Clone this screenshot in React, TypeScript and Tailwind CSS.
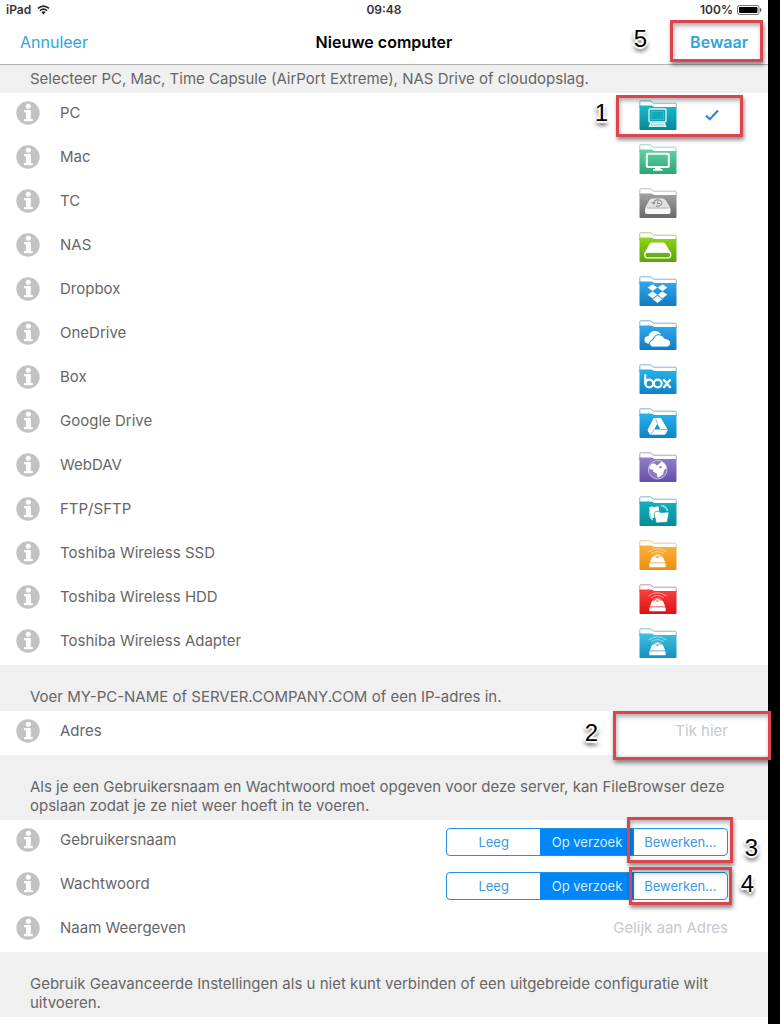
import React, { useState } from "react";
import { clsx } from "clsx";

type Theme = { id: string; top: string; bottom: string; edge: string };

type Source = { name: string; theme: Theme; glyph: React.ReactNode };

const router = (
  <g>
    <path d="M9.500 12Q18.500 5.500 27.500 12M12 13.800Q18.500 9.300 25 13.800M14.500 15.500Q18.500 12.700 22.500 15.500" fill="none" stroke="#fff" strokeOpacity=".5" strokeWidth="1" />
    <path d="M10.800 22.500L12.800 17.500Q13.200 16.500 14.200 16.500H15.700Q16.300 15 18.500 15T21.300 16.500H22.800Q23.800 16.500 24.200 17.500L26.200 22.500Z" fill="#fff" />
    <path d="M16.500 16.700Q18.500 19.800 20.500 16.700L19.500 16H17.500Z" fill="#c98a4a" fillOpacity=".65" />
    <rect x="10.300" y="23.300" width="16.400" height="4" rx=".8" fill="#fff" />
  </g>
);

const teal: Theme = { id: "teal", top: "#18b9cc", bottom: "#068798", edge: "#7fb8cc" };
const mint: Theme = { id: "mint", top: "#5fd3a4", bottom: "#2aa873", edge: "#8fdcbc" };
const grey: Theme = { id: "grey", top: "#a2a2a2", bottom: "#696969", edge: "#bdbdbd" };
const lime: Theme = { id: "lime", top: "#8fd414", bottom: "#5aa40c", edge: "#a6cf70" };
const blue: Theme = { id: "blue", top: "#2fa9ec", bottom: "#1279c4", edge: "#78b4e0" };
const sky: Theme = { id: "sky", top: "#27b2ea", bottom: "#0c84c8", edge: "#78b4e0" };
const violet: Theme = { id: "violet", top: "#8f7fca", bottom: "#6650a8", edge: "#aaa0cc" };
const sea: Theme = { id: "sea", top: "#12b3bd", bottom: "#078a92", edge: "#72bcc8" };
const orange: Theme = { id: "orange", top: "#fbb13c", bottom: "#ee8d12", edge: "#f0c58c" };
const red: Theme = { id: "red", top: "#fb4040", bottom: "#dc1212", edge: "#d68c98" };
const cyan: Theme = { id: "cyan", top: "#3fbfe2", bottom: "#1690bd", edge: "#82bcd4" };

const sources: Source[] = [
  {
    name: "PC",
    theme: teal,
    glyph: (
      <g>
        <rect x="10" y="9" width="17" height="13" rx="1" fill="#0fa3b5" stroke="#fff" strokeOpacity=".9" strokeWidth="1.300" />
        <rect x="12.500" y="11.300" width="12" height="8.400" fill="#12a9bb" stroke="#fff" strokeOpacity=".3" strokeWidth=".7" />
        <path d="M11 23H26L27.500 27H9.500Z" fill="#fff" fillOpacity=".9" />
        <path d="M12 24.500H25M11.500 25.800H25.500" stroke="#0b8fa0" strokeWidth=".4" strokeDasharray="1 .6" />
      </g>
    ),
  },
  {
    name: "Mac",
    theme: mint,
    glyph: (
      <g>
        <rect x="7.800" y="9.800" width="22" height="13.200" rx="1" fill="none" stroke="#fff" strokeWidth="2" />
        <path d="M16 23.500H21.500V25H23.500V26.800H14V25H16Z" fill="#fff" />
      </g>
    ),
  },
  {
    name: "TC",
    theme: grey,
    glyph: (
      <g>
        <path d="M6.500 19L10.500 12Q11.500 10.500 13.500 10.500H23.500Q25.500 10.500 26.500 12L31 19Q31 20 29.500 20H7.500Q6.500 20 6.500 19Z" fill="#fff" fillOpacity=".75" />
        <rect x="6" y="19.600" width="25.500" height="6.400" rx="2" fill="#fff" fillOpacity=".95" />
        <path d="M14.500 15.500A4.200 3.200 0 1 1 17 18M13 14.300L14.500 16L16.300 14.500M18.500 13.500V15.500H20.500" fill="none" stroke="#777" strokeWidth="1" />
        <path d="M8 20H29.500" stroke="#777" strokeWidth=".6" />
      </g>
    ),
  },
  {
    name: "NAS",
    theme: lime,
    glyph: (
      <g>
        <path d="M5.800 20.500L10.500 12Q11.300 10.500 13 10.500H24Q25.700 10.500 26.500 12L31.700 20.500Z" fill="#fff" />
        <rect x="5.800" y="20" width="25.900" height="5.800" rx="2.500" fill="none" stroke="#fff" strokeWidth="1.300" />
      </g>
    ),
  },
  {
    name: "Dropbox",
    theme: blue,
    glyph: (
      <path d="M13.600 8.200L18.500 11.600 13.600 15.200 8.500 11.600ZM23.400 8.200L28.500 11.600 23.400 15.200 18.500 11.600ZM13.600 15.200L18.500 18.800 13.600 22.400 8.500 18.800ZM23.400 15.200L28.500 18.800 23.400 22.400 18.500 18.800ZM13.500 23.200L18.500 19.800 23.500 23.200 18.500 27Z" fill="#fff" stroke="#3a9bdc" strokeWidth=".3" />
    ),
  },
  {
    name: "OneDrive",
    theme: blue,
    glyph: (
      <g fill="#fff">
        <path d="M8.500 23.500Q5 22.500 5.500 19Q6.300 16 9.500 16Q11.200 11 16 11Q20.500 11 22.200 14.800L13 24Z" />
        <path d="M13.500 27Q10.500 26.300 10.500 23.200Q10.800 20.300 14 19.800Q15.300 14.700 19.700 14.700Q24 14.700 25.800 18.500Q31.700 19 31.700 23.200Q31.500 27 27.800 27Z" stroke="#1d88d0" strokeWidth="1" />
      </g>
    ),
  },
  {
    name: "Box",
    theme: sky,
    glyph: (
      <g fill="none" stroke="#fff" strokeWidth="2.200" strokeLinecap="round" strokeLinejoin="round">
        <path d="M6.300 11V19.500" />
        <circle cx="10.300" cy="19.500" r="3.900" />
        <circle cx="18.800" cy="19.500" r="3.900" />
        <path d="M25 16L31 23.200M31 16L25 23.200" />
      </g>
    ),
  },
  {
    name: "Google Drive",
    theme: sky,
    glyph: (
      <g>
        <path d="M15.200 10H21.200Q22 10 22.500 11L28.300 21Q28.700 22 28.300 22.700L26.500 26Q26 26.800 25 26.800H12Q11 26.800 10.500 26L8.800 22.700Q8.500 22 9 21L14.200 11Q14.500 10 15.200 10Z" fill="#fff" />
        <path d="M18.300 15.800L21.500 21.500H15.200Z" fill="#1795d6" />
        <path d="M16.500 10.500L18.500 15.500M21.500 21.500H28M12 26.500L15.200 21.500" stroke="#1795d6" strokeWidth=".6" />
      </g>
    ),
  },
  {
    name: "WebDAV",
    theme: violet,
    glyph: (
      <g>
        <circle cx="18.700" cy="17.700" r="9.300" fill="#8a79c2" stroke="#d9d3ee" strokeWidth=".8" />
        <path d="M12 12.500Q13.500 11 15.500 11.500L18 13.500 20 12 22.500 9.500Q26.500 11.500 27.500 16L25 18.500L24 22.500 20.500 25Q18.500 26 18 24L17.800 21.500 14 19.800 14.500 18 10.500 17Q10 14.500 12 12.500Z" fill="#fff" />
        <path d="M21 14L23 15 22 16.500 20 15.800Z" fill="#8575bf" />
      </g>
    ),
  },
  {
    name: "FTP/SFTP",
    theme: sea,
    glyph: (
      <g>
        <path d="M14 24Q9.500 20.500 11 15M22 9.500Q27.500 10 28.500 15" fill="none" stroke="#8ee2e6" strokeWidth="1.500" />
        <path d="M10 11.500L13 10.200 14.500 11.200 19.500 10.200 20.800 19.500 12.500 22.500Z" fill="#fff" />
        <path d="M15 17.500L16.500 15.500 20 15.200 21 16.500 30 16 28.300 26 17.300 27Z" fill="#fff" stroke="#0c9da6" strokeWidth=".7" />
      </g>
    ),
  },
  { name: "Toshiba Wireless SSD", theme: orange, glyph: router },
  { name: "Toshiba Wireless HDD", theme: red, glyph: router },
  { name: "Toshiba Wireless Adapter", theme: cyan, glyph: router },
];

function Folder({ source }: { source: Source }) {
  const { theme, glyph, name } = source;
  const gradient = `folder-${theme.id}-${name.replace(/\W/g, "")}`;
  return (
    <svg width="38" height="30" viewBox="0 0 38 30" aria-hidden="true" className="shrink-0">
      <defs>
        <linearGradient id={gradient} x1="0" y1="0" x2="0" y2="1">
          <stop offset="0" stopColor={theme.top} />
          <stop offset="1" stopColor={theme.bottom} />
        </linearGradient>
      </defs>
      <path d="M.8 8V1.800Q.8.800 1.800.800H11Q12 .8 13 2L14.500 3.200H36.500Q37.200 3.200 37.200 4V8" fill="#fff" stroke={theme.edge} strokeWidth="1" />
      <path d="M.5 5.500H12.500L15.500 7H37.500V29Q37.500 30 36.500 30H1.500Q.5 30 .5 29Z" fill={`url(#${gradient})`} />
      {glyph}
    </svg>
  );
}

function InfoButton({ topic }: { topic: string }) {
  return (
    <button type="button" aria-label={`Info: ${topic}`} className="mb-1 size-6 shrink-0">
      <svg viewBox="0 0 24 24" className="size-6">
        <circle cx="12" cy="12" r="11.700" fill="#c2c2c2" />
        <circle cx="12.300" cy="5.200" r="2.500" fill="#fff" />
        <path d="M8 9H14.800V18H16.700V20.200H8V18H10V11.200H8Z" fill="#fff" />
      </svg>
    </button>
  );
}

function Note({ children, compact }: { children: React.ReactNode; compact?: boolean }) {
  return (
    <p className={clsx("bg-[#f0f0f0] pr-6 pl-[30px] text-[15px] leading-[19px] text-[#666]", compact ? "pt-1 pb-[5px]" : "pt-[22px] pb-[5px]")}>
      {children}
    </p>
  );
}

function Frame({ className }: { className: string }) {
  return <span aria-hidden="true" className={clsx("pointer-events-none absolute z-10 border-3 border-[#dc4450] shadow-[1px_3px_4px_rgba(0,0,0,0.45),inset_1px_3px_4px_rgba(0,0,0,0.3)]", className)} />;
}

function Step({ n, className }: { n: number; className: string }) {
  return (
    <span className={clsx("pointer-events-none absolute z-10 font-['Liberation_Sans',sans-serif] text-[24px] leading-6 text-black [text-shadow:0_0_3px_#fff,2px_0_1px_#fff,-2px_0_1px_#fff,0_-2px_1px_#fff,0_2px_1px_#fff,1px_4px_4px_rgba(0,0,0,0.7),-2px_3px_4px_rgba(0,0,0,0.4)]", className)}>
      {n}
    </span>
  );
}

const choices = ["Leeg", "Op verzoek", "Bewerken..."];

function Segmented({ label }: { label: string }) {
  const [active, setActive] = useState(1);
  return (
    <div role="group" aria-label={label} className="grid h-7 w-[282px] grid-cols-3 overflow-hidden rounded-sm border border-[#2490e4] bg-white">
      {choices.map((choice, i) => (
        <button
          key={choice}
          type="button"
          aria-pressed={active === i}
          onClick={() => setActive(i)}
          className={clsx("text-[13px] leading-5", active === i ? "bg-[#0087fa] text-[#d9eeff]" : "text-[#3d98de]")}
        >
          {choice}
        </button>
      ))}
    </div>
  );
}

const row = "relative flex h-11 items-center pr-10 pl-4";
const labelStyle = "mb-1 ml-5 flex-1 text-[15px] leading-5 text-[#666]";
const fieldStyle = "mb-1 w-40 bg-transparent text-right text-[15px] leading-5 text-[#666] outline-none placeholder:text-[#c8c8cc]";

export default function App() {
  const [selected, setSelected] = useState("PC");
  return (
    <div className="min-h-screen bg-black pr-3 font-['Inter','Liberation_Sans',sans-serif]">
      <div className="min-h-screen bg-white">
        <div className="grid h-5 grid-cols-3 items-center pr-1.5 pl-1.5 text-[12px] leading-4 font-semibold text-[#333]">
          <span className="flex items-center gap-1.5">
            iPad
            <svg width="13" height="10" viewBox="0 0 13 10" aria-hidden="true">
              <path d="M1 3.400Q6.500-1.200 12 3.400M2.900 5.600Q6.500 2.600 10.100 5.600" fill="none" stroke="#222" strokeWidth="1.600" />
              <path d="M4.300 7.100Q6.500 5.200 8.700 7.100L6.500 9.500Z" fill="#222" />
            </svg>
          </span>
          <span className="text-center">09:48</span>
          <span className="flex items-center justify-end gap-1">
            100%
            <svg width="25" height="10" viewBox="0 0 25 10" aria-hidden="true">
              <rect x=".5" y=".5" width="21.500" height="9" rx="2" fill="none" stroke="#777" />
              <rect x="2" y="2" width="18.500" height="6" rx="1" fill="#000" />
              <path d="M23 3Q24.500 3.500 24.500 5T23 7Z" fill="#555" />
            </svg>
          </span>
        </div>

        <header className="relative flex h-[45px] items-center justify-between border-b border-[#b2b2b2] px-5 text-[16px]">
          <button type="button" className="text-[#2ea5dc]">Annuleer</button>
          <h1 className="absolute inset-x-40 text-center font-semibold text-black">Nieuwe computer</h1>
          <button type="button" className="font-semibold text-[#2ea5dc]">Bewaar</button>
          <Step n={5} className="top-[7px] right-[121px]" />
          <Frame className="top-0 right-[5px] h-[42px] w-[93px]" />
        </header>

        <main>
          <Note compact>Selecteer PC, Mac, Time Capsule (AirPort Extreme), NAS Drive of cloudopslag.</Note>
          <ul>
            {sources.map((source) => (
              <li key={source.name} className="relative flex h-11 items-center pl-4">
                <InfoButton topic={source.name} />
                <button type="button" aria-pressed={selected === source.name} onClick={() => setSelected(source.name)} className="flex h-full min-w-0 flex-1 items-center pr-12 text-left">
                  <span className={labelStyle}>{source.name}</span>
                  <Folder source={source} />
                  <span className="ml-[27px] flex w-4 justify-center">
                    {selected === source.name && (
                      <svg width="14" height="12" viewBox="0 0 14 12" aria-hidden="true">
                        <path d="M1 6.500L4.800 10.200 13 1.500" fill="none" stroke="#3e80d8" strokeWidth="2.300" />
                      </svg>
                    )}
                  </span>
                </button>
                {source.name === "PC" && (
                  <>
                    <Step n={1} className="top-2 right-[160px]" />
                    <Frame className="top-0.5 right-[25px] h-[42px] w-[127px]" />
                  </>
                )}
              </li>
            ))}
          </ul>

          <Note>Voer MY-PC-NAME of SERVER.COMPANY.COM of een IP-adres in.</Note>
          <div className={row}>
            <InfoButton topic="Adres" />
            <label htmlFor="address" className={labelStyle}>Adres</label>
            <input id="address" placeholder="Tik hier" className={fieldStyle} />
            <Step n={2} className="top-2.5 right-[170px]" />
            <Frame className="top-0 -right-[3px] h-[49px] w-[158px]" />
          </div>

          <Note>Als je een Gebruikersnaam en Wachtwoord moet opgeven voor deze server, kan FileBrowser deze opslaan zodat je ze niet weer hoeft in te voeren.</Note>
          <div className={row}>
            <InfoButton topic="Gebruikersnaam" />
            <span className={labelStyle}>Gebruikersnaam</span>
            <Segmented label="Gebruikersnaam" />
            <Step n={3} className="top-4 right-2.5" />
            <Frame className="-top-[3px] right-[35px] h-[46px] w-[106px]" />
          </div>
          <div className={row}>
            <InfoButton topic="Wachtwoord" />
            <span className={labelStyle}>Wachtwoord</span>
            <Segmented label="Wachtwoord" />
            <Step n={4} className="top-2 right-3.5" />
            <Frame className="top-[3px] right-9 h-[38px] w-[103px]" />
          </div>
          <div className={row}>
            <InfoButton topic="Naam Weergeven" />
            <label htmlFor="display-name" className={labelStyle}>Naam Weergeven</label>
            <input id="display-name" placeholder="Gelijk aan Adres" className={fieldStyle} />
          </div>

          <Note>Gebruik Geavanceerde Instellingen als u niet kunt verbinden of een uitgebreide configuratie wilt uitvoeren.</Note>
        </main>
      </div>
    </div>
  );
}
